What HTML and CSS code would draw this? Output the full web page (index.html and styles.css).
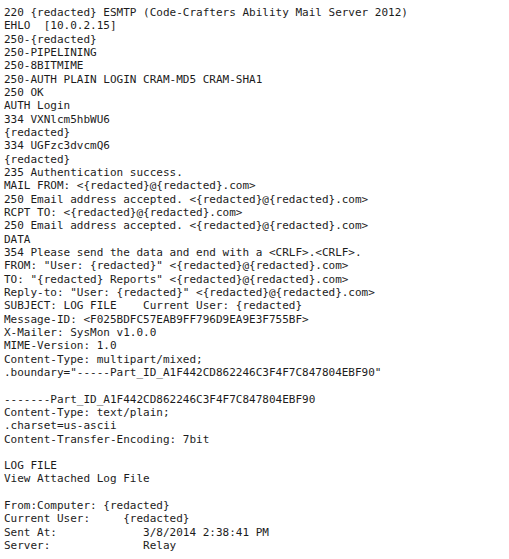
FILE: index.html
```html
<!DOCTYPE html>
<html>
<head>
<meta charset="utf-8">
<link rel="stylesheet" href="styles.css">
</head>
<body>
<pre class="log">220 {redacted} ESMTP (Code-Crafters Ability Mail Server 2012)
EHLO  [10.0.2.15]
250-{redacted}
250-PIPELINING
250-8BITMIME
250-AUTH PLAIN LOGIN CRAM-MD5 CRAM-SHA1
250 OK
AUTH Login
334 VXNlcm5hbWU6
{redacted}
334 UGFzc3dvcmQ6
{redacted}
235 Authentication success.
MAIL FROM: &lt;{redacted}@{redacted}.com&gt;
250 Email address accepted. &lt;{redacted}@{redacted}.com&gt;
RCPT TO: &lt;{redacted}@{redacted}.com&gt;
250 Email address accepted. &lt;{redacted}@{redacted}.com&gt;
DATA
354 Please send the data and end with a &lt;CRLF&gt;.&lt;CRLF&gt;.
FROM: "User: {redacted}" &lt;{redacted}@{redacted}.com&gt;
TO: "{redacted} Reports" &lt;{redacted}@{redacted}.com&gt;
Reply-to: "User: {redacted}" &lt;{redacted}@{redacted}.com&gt;
SUBJECT: LOG FILE    Current User: {redacted}
Message-ID: &lt;F025BDFC57EAB9FF796D9EA9E3F755BF&gt;
X-Mailer: SysMon v1.0.0
MIME-Version: 1.0
Content-Type: multipart/mixed;
.boundary="-----Part_ID_A1F442CD862246C3F4F7C847804EBF90"

-------Part_ID_A1F442CD862246C3F4F7C847804EBF90
Content-Type: text/plain;
.charset=us-ascii
Content-Transfer-Encoding: 7bit

LOG FILE
View Attached Log File

From:Computer: {redacted}
Current User:     {redacted}
Sent At:             3/8/2014 2:38:41 PM
Server:              Relay</pre>
</body>
</html>
```
FILE: styles.css
```css
html, body {
  margin: 0;
  padding: 0;
  background: #ffffff;
}
body {
  padding: 6px 0 0 4px;
}
.log {
  margin: 0;
  font-family: "DejaVu Sans Mono", monospace;
  font-size: 11px;
  line-height: 13.33px;
  color: #1c1c1c;
  white-space: pre;
}
```
